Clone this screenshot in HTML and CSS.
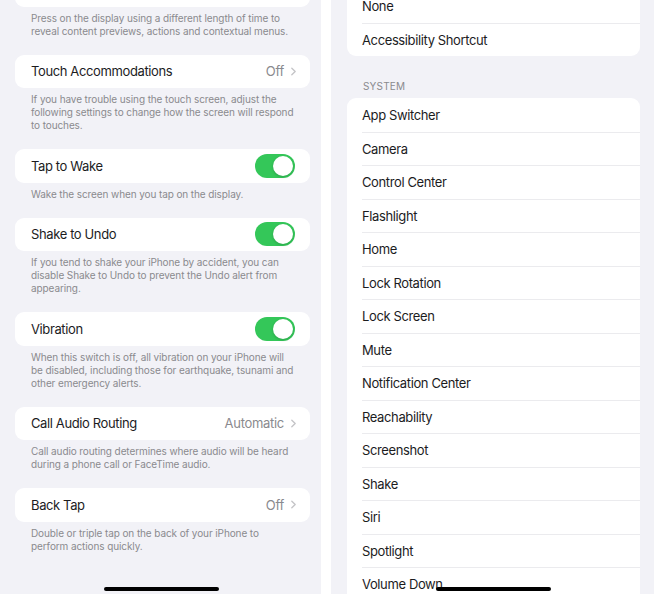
FILE: index.html
```html
<!DOCTYPE html>
<html lang="en">
<head>
<meta charset="utf-8">
<title>Touch settings</title>
<link rel="stylesheet" href="styles.css">
</head>
<body>
<div class="screens">
  <section class="panel panel-left">
    <div class="scroll scroll-left">
      <div class="card">
        <div class="row"><span class="label">Haptic Touch</span><span class="value">Fast</span></div>
      </div>
      <p class="footer">Press on the display using a different length of time to reveal content previews, actions and contextual menus.</p>

      <div class="card">
        <div class="row"><span class="label">Touch Accommodations</span><span class="value">Off<svg class="chev" viewBox="0 0 6 10"><polyline points="1,1 5,5 1,9"/></svg></span></div>
      </div>
      <p class="footer">If you have trouble using the touch screen, adjust the following settings to change how the screen will respond to touches.</p>

      <div class="card">
        <div class="row"><span class="label">Tap to Wake</span><span class="toggle"><span class="knob"></span></span></div>
      </div>
      <p class="footer">Wake the screen when you tap on the display.</p>

      <div class="card">
        <div class="row"><span class="label">Shake to Undo</span><span class="toggle"><span class="knob"></span></span></div>
      </div>
      <p class="footer">If you tend to shake your iPhone by accident, you can disable Shake to Undo to prevent the Undo alert from appearing.</p>

      <div class="card">
        <div class="row"><span class="label">Vibration</span><span class="toggle"><span class="knob"></span></span></div>
      </div>
      <p class="footer">When this switch is off, all vibration on your iPhone will be disabled, including those for earthquake, tsunami and other emergency alerts.</p>

      <div class="card">
        <div class="row"><span class="label">Call Audio Routing</span><span class="value">Automatic<svg class="chev" viewBox="0 0 6 10"><polyline points="1,1 5,5 1,9"/></svg></span></div>
      </div>
      <p class="footer">Call audio routing determines where audio will be heard during a phone call or FaceTime audio.</p>

      <div class="card">
        <div class="row"><span class="label">Back Tap</span><span class="value">Off<svg class="chev" viewBox="0 0 6 10"><polyline points="1,1 5,5 1,9"/></svg></span></div>
      </div>
      <p class="footer">Double or triple tap on the back of your iPhone to perform actions quickly.</p>
    </div>
    <div class="home-indicator"></div>
  </section>

  <section class="panel panel-right">
    <div class="scroll scroll-right">
      <div class="card">
        <div class="item">None</div>
        <div class="item">Accessibility Shortcut</div>
      </div>
      <h2 class="header">System</h2>
      <div class="card">
        <div class="item">App Switcher</div>
        <div class="item">Camera</div>
        <div class="item">Control Center</div>
        <div class="item">Flashlight</div>
        <div class="item">Home</div>
        <div class="item">Lock Rotation</div>
        <div class="item">Lock Screen</div>
        <div class="item">Mute</div>
        <div class="item">Notification Center</div>
        <div class="item">Reachability</div>
        <div class="item">Screenshot</div>
        <div class="item">Shake</div>
        <div class="item">Siri</div>
        <div class="item">Spotlight</div>
        <div class="item">Volume Down</div>
        <div class="item">Volume Up</div>
      </div>
    </div>
    <div class="home-indicator"></div>
  </section>
</div>
</body>
</html>
```

FILE: styles.css
```css
* { box-sizing: border-box; }

body {
  margin: 0;
  background: #ffffff;
  font-family: Inter, "Noto Sans", "Liberation Sans", sans-serif;
  color: #1c1c1e;
  -webkit-font-smoothing: antialiased;
}

.screens {
  display: flex;
  gap: 10px;
  width: 654px;
  height: 600px;
}

.panel {
  position: relative;
  height: 594px;
  background: #f2f2f7;
  overflow: hidden;
}

.panel-left { width: 321px; flex: none; }
.panel-right { flex: 1; }

.scroll-left { padding: 0 11px 0 15px; margin-top: -27px; }
.scroll-right { padding: 0 14px 0 16px; margin-top: -11px; }

.card {
  background: #ffffff;
  border-radius: 9px;
  overflow: hidden;
}

.row {
  height: 33.5px;
  display: flex;
  align-items: center;
  justify-content: space-between;
  padding: 0 15px 0 16px;
}

.label {
  font-size: 13px;
  letter-spacing: -0.38px;
}

.value {
  display: flex;
  align-items: center;
  gap: 7px;
  font-size: 13px;
  letter-spacing: -0.3px;
  color: #8a8a8e;
  margin-right: -1px;
}

.chev {
  width: 5px;
  height: 9px;
  fill: none;
  stroke: #c4c4c7;
  stroke-width: 1.6;
  stroke-linecap: round;
  stroke-linejoin: round;
}

.toggle {
  position: relative;
  width: 40px;
  height: 24px;
  border-radius: 12px;
  background: #34c759;
}

.knob {
  position: absolute;
  right: 2px;
  top: 2px;
  width: 20px;
  height: 20px;
  border-radius: 50%;
  background: #ffffff;
  box-shadow: 0 1px 3px rgba(0, 0, 0, 0.18);
}

.footer {
  margin: 0 0 17px;
  padding: 5px 16px 0 16px;
  font-size: 10px;
  line-height: 13px;
  letter-spacing: -0.1px;
  color: #8a8a8e;
}

.header {
  margin: 0;
  padding: 24px 0 5px 16px;
  font-size: 10px;
  line-height: 13px;
  font-weight: 400;
  text-transform: uppercase;
  color: #8a8a8e;
  letter-spacing: 0.2px;
}

.item {
  height: 33.5px;
  display: flex;
  align-items: center;
  margin-left: 15px;
  font-size: 13px;
  letter-spacing: -0.38px;
}

.item + .item {
  border-top: 1px solid #ebebee;
}

.home-indicator {
  position: absolute;
  left: 50%;
  bottom: 3px;
  width: 115px;
  height: 4px;
  margin-left: -57px;
  border-radius: 2px;
  background: #000000;
}
```
